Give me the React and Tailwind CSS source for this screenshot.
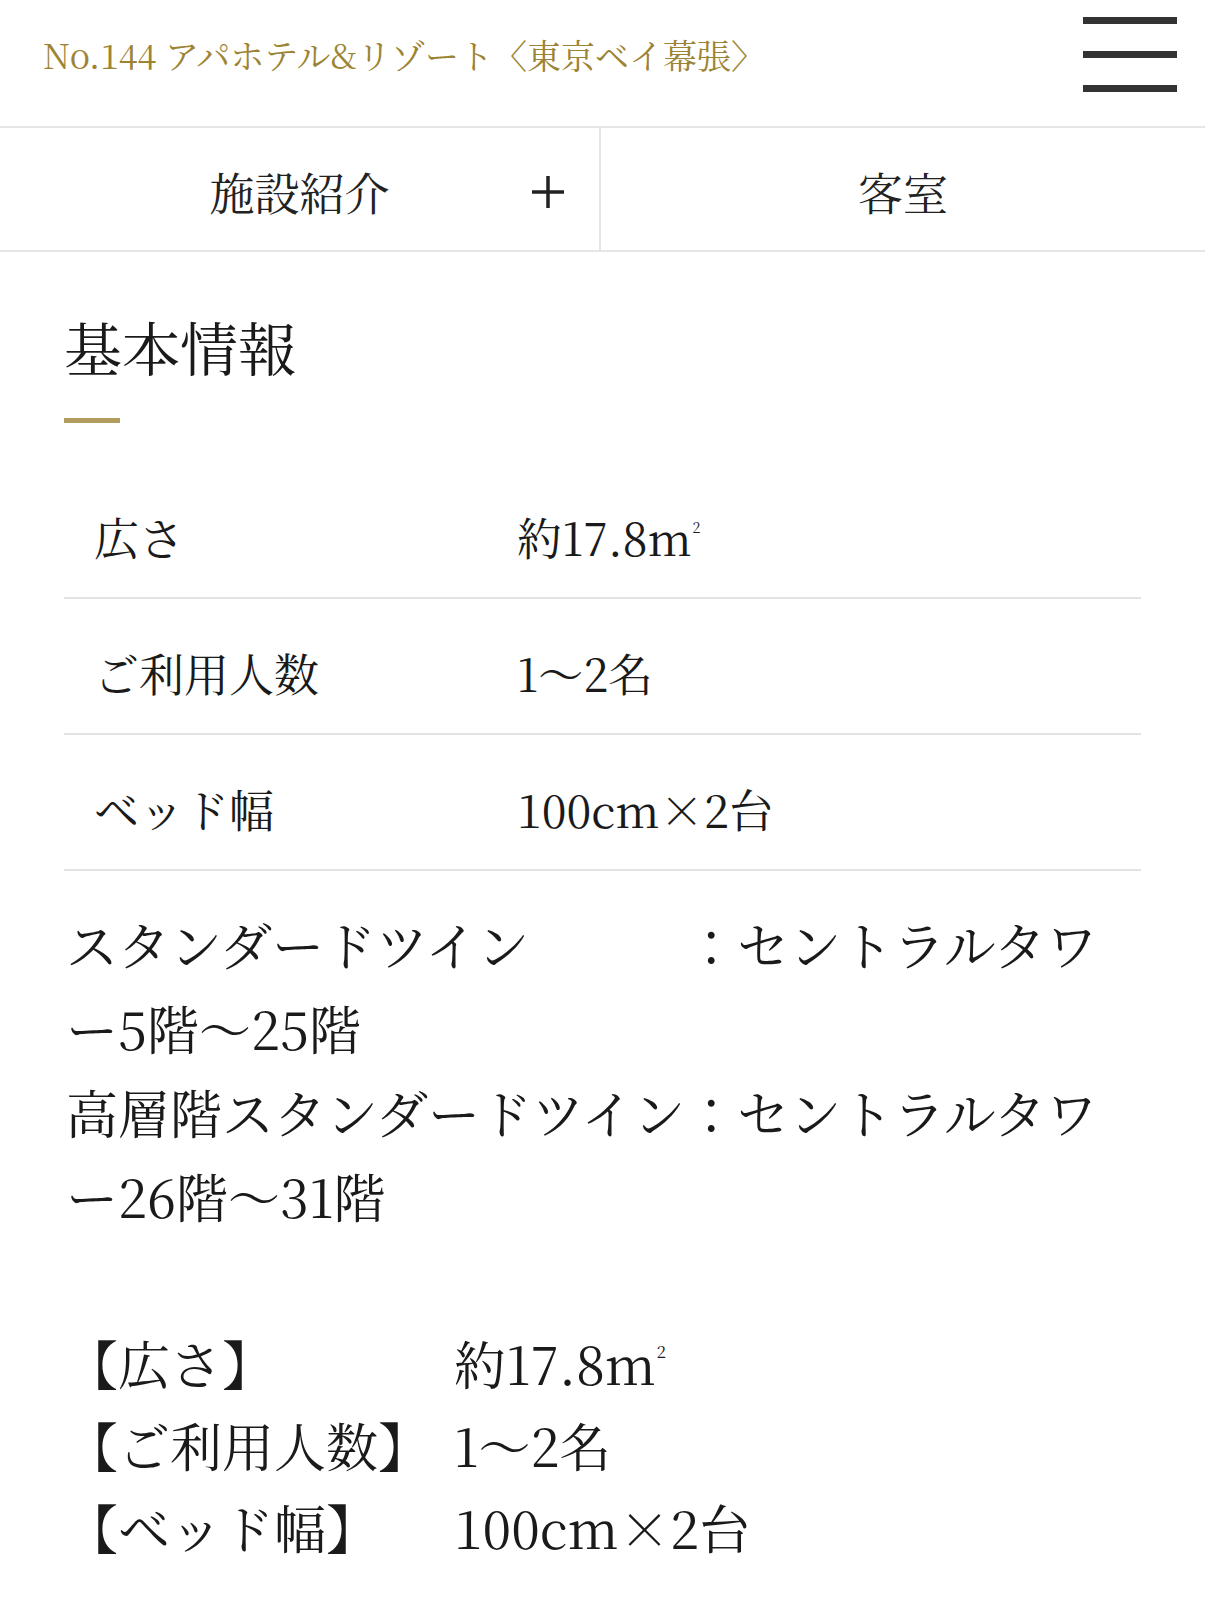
import React from 'react';

const serif = { fontFamily: '"Noto Serif CJK JP", "Liberation Serif", "Noto Sans CJK JP", serif' };

const Sq = () => (
  <>m<sup className="ml-[1px] text-[0.32em] align-[1.1em]">2</sup></>
);

const specs = [
  { label: '広さ', value: <>約17.8<Sq /></> },
  { label: 'ご利用人数', value: '1～2名' },
  { label: 'ベッド幅', value: '100cm×2台' },
];

const listRows = [
  { label: '【広さ】', value: <>約17.8<Sq /></> },
  { label: '【ご利用人数】', value: '1～2名' },
  { label: '【ベッド幅】', value: '100cm×2台' },
];

const App = () => {
  return (
    <div className="w-[1205px] min-h-[1600px] bg-white text-[#1a1a1a]" style={serif}>
      {/* Header */}
      <header className="flex h-[128px] items-center justify-between border-b-2 border-[#e6e6e6] pl-[43px] pr-[28px]">
        <div className="-mt-[18px] text-[34px] text-[#9c8434]">
          No.144 アパホテル&amp;リゾート〈東京ベイ幕張〉
        </div>
        <button className="-mt-[18px] flex w-[94px] flex-col gap-[27px]" aria-label="menu">
          <span className="block h-[7px] w-full bg-[#333]"></span>
          <span className="block h-[7px] w-full bg-[#333]"></span>
          <span className="block h-[7px] w-full bg-[#333]"></span>
        </button>
      </header>

      {/* Tabs */}
      <nav className="flex h-[124px] border-b-2 border-[#e6e6e6]">
        <div className="relative flex w-[601px] items-center justify-center border-r-2 border-[#e6e6e6] pt-[6px] text-[45px] text-[#222]">
          施設紹介
          <svg className="absolute right-[34px] top-[47px]" width="34" height="34" viewBox="0 0 34 34">
            <line x1="17" y1="1" x2="17" y2="33" stroke="#222" strokeWidth="3.5" />
            <line x1="1" y1="17" x2="33" y2="17" stroke="#222" strokeWidth="3.5" />
          </svg>
        </div>
        <div className="flex flex-1 items-center justify-center pt-[6px] text-[45px] text-[#222]">客室</div>
      </nav>

      <main className="px-[64px]">
        {/* Heading */}
        <h2 className="mt-[51px] text-[58px] leading-[87px]">基本情報</h2>
        <div className="mt-[28px] h-[5px] w-[56px] bg-[#b39d5e]"></div>

        {/* Spec table */}
        <div className="mt-[40px] w-[1077px]">
          {specs.map((row) => (
            <div key={row.label} className="flex h-[136px] items-center border-b-2 border-[#e3e3e3] pt-[14px] text-[45px] leading-[1.5]">
              <div className="w-[453px] pl-[30px]">{row.label}</div>
              <div>{row.value}</div>
            </div>
          ))}
        </div>

        {/* Floor info */}
        <div className="mt-[31px] max-w-[1070px] pl-[2px] text-[52px] leading-[84px] [line-break:loose]">
          <p>スタンダードツイン　　　：セントラルタワー5階～25階</p>
          <p>高層階スタンダードツイン：セントラルタワー26階～31階</p>
          <p>&nbsp;</p>
          {listRows.map((row) => (
            <div key={row.label} className="grid grid-cols-[388px_1fr] leading-[82px]">
              <div>{row.label}</div>
              <div>{row.value}</div>
            </div>
          ))}
        </div>
      </main>
    </div>
  );
};

export default App;
